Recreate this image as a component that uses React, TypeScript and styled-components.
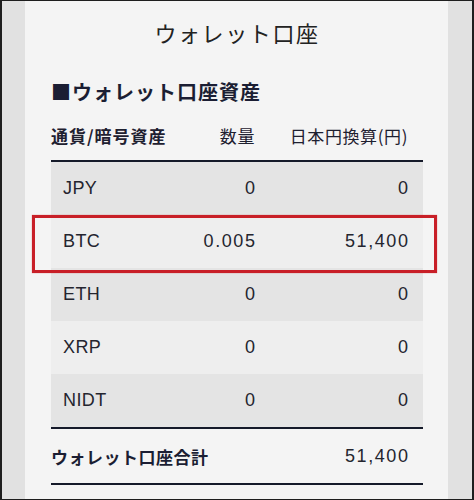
import React from "react";
import styled, { createGlobalStyle } from "styled-components";

const GlobalStyle = createGlobalStyle`
  html, body { margin: 0; padding: 0; background: #e2e2e2; }
  body { font-family: "Liberation Sans", "Noto Sans CJK JP", sans-serif; }
`;

const JP = `"Noto Sans CJK JP", "Liberation Sans", sans-serif`;
const LATIN = `"Liberation Sans", "Noto Sans CJK JP", sans-serif`;

const Frame = styled.div`
  box-sizing: border-box;
  width: 474px;
  height: 500px;
  border-style: solid;
  border-color: #1e1e1e;
  border-width: 1px 2px 1px 2px;
  background: #e1e1e1;
  padding: 0 24px 0 23px;
  overflow: hidden;
`;

const Panel = styled.div`
  box-sizing: border-box;
  height: 100%;
  background: #f4f4f4;
  padding: 15px 25px 0 26px;
  color: #20222c;
`;

const Title = styled.h1`
  margin: 0;
  font-family: ${JP};
  font-weight: 400;
  font-size: 22px;
  line-height: 32px;
  letter-spacing: 1.6px;
  text-align: center;
  color: #222;
`;

const Heading = styled.h2`
  margin: 30px 0 0 0;
  font-family: ${JP};
  font-weight: 700;
  font-size: 20px;
  line-height: 28px;
  letter-spacing: 1px;
  color: #1b1e33;
`;

const Table = styled.div`
  display: flex;
  flex-direction: column;
`;

const grid = `
  display: grid;
  grid-template-columns: minmax(0, 1fr) 110px 153px;
  align-items: center;
`;

const HeaderRow = styled.div`
  ${grid}
  box-sizing: border-box;
  height: 56px;
  padding: 5px 15px 0 0;
  border-bottom: 2px solid #151a2a;
  font-family: ${JP};
  font-size: 17px;
  color: #1e2030;
`;

const HeadCell = styled.div<{ $bold?: boolean; $right?: boolean }>`
  font-weight: ${(p) => (p.$bold ? 700 : 400)};
  text-align: ${(p) => (p.$right ? "right" : "left")};
  letter-spacing: ${(p) => (p.$bold ? "1px" : "0.6px")};
  white-space: nowrap;
`;

const Row = styled.div<{ $shade: boolean }>`
  ${grid}
  position: relative;
  height: 53px;
  padding: 0 15px 0 12px;
  background: ${(p) => (p.$shade ? "#e4e4e4" : "#eeeeee")};
  font-family: ${LATIN};
  font-size: 18px;
  color: #24252f;
`;

const Cell = styled.div<{ $right?: boolean }>`
  text-align: ${(p) => (p.$right ? "right" : "left")};
  letter-spacing: ${(p) => (p.$right ? "1.6px" : "0.4px")};
  margin-right: ${(p) => (p.$right ? "-1.6px" : "0")};
`;

const Highlight = styled.div`
  position: absolute;
  z-index: 1;
  left: -19px;
  right: -14px;
  top: 0;
  height: 58px;
  box-sizing: border-box;
  border: 3px solid #c81f27;
  box-shadow: 0 0 1px rgba(200, 31, 39, 0.6);
  pointer-events: none;
`;

const TotalRow = styled.div`
  display: grid;
  grid-template-columns: 1fr auto;
  align-items: center;
  height: 54px;
  padding: 0 15px 0 0;
  border-top: 2px solid #151a2a;
  border-bottom: 2px solid #151a2a;
`;

const TotalLabel = styled.div`
  font-family: ${JP};
  font-weight: 700;
  font-size: 17px;
  letter-spacing: 0.5px;
  color: #1b1e33;
`;

const TotalValue = styled.div`
  font-family: ${LATIN};
  font-size: 18px;
  letter-spacing: 1.6px;
  margin-right: -1.6px;
  color: #24252f;
`;

const rows = [
  { c: "JPY", q: "0", v: "0" },
  { c: "BTC", q: "0.005", v: "51,400", hl: true },
  { c: "ETH", q: "0", v: "0" },
  { c: "XRP", q: "0", v: "0" },
  { c: "NIDT", q: "0", v: "0" },
];

export default function App() {
  return (
    <>
      <GlobalStyle />
      <Frame>
        <Panel>
          <Title>ウォレット口座</Title>
          <Heading>■ウォレット口座資産</Heading>
          <Table>
            <HeaderRow>
              <HeadCell $bold>通貨/暗号資産</HeadCell>
              <HeadCell $right>数量</HeadCell>
              <HeadCell $right>日本円換算(円)</HeadCell>
            </HeaderRow>
            {rows.map((r, i) => (
              <Row key={r.c} $shade={i % 2 === 0}>
                <Cell>{r.c}</Cell>
                <Cell $right>{r.q}</Cell>
                <Cell $right>{r.v}</Cell>
                {r.hl && <Highlight />}
              </Row>
            ))}
            <TotalRow>
              <TotalLabel>ウォレット口座合計</TotalLabel>
              <TotalValue>51,400</TotalValue>
            </TotalRow>
          </Table>
        </Panel>
      </Frame>
    </>
  );
}
